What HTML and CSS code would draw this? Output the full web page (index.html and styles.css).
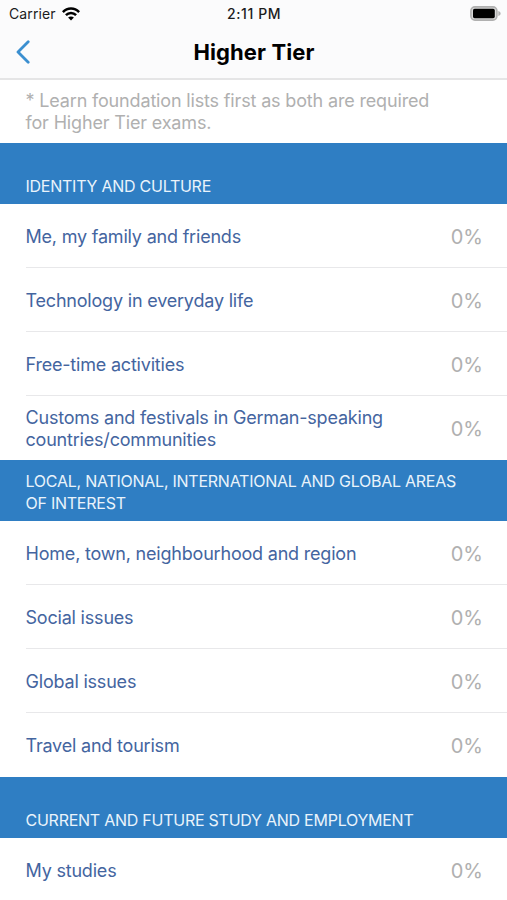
FILE: index.html
```html
<!DOCTYPE html>
<html lang="en">
<head>
  <meta charset="UTF-8">
  <meta name="viewport" content="width=device-width, initial-scale=1.0">
  <title>Higher Tier</title>
  <link rel="stylesheet" href="styles.css">
</head>
<body>
  <header class="top">
    <div class="status-bar">
      <div class="carrier">
        <span>Carrier</span>
        <svg class="wifi-icon" viewBox="0 0 18 14" fill="none" stroke="currentColor" stroke-width="2.5">
          <path d="M0.9 5.1C5.4 0.3 12.6 0.3 17.1 5.1"></path>
          <path d="M3.9 8.2C6.8 5.2 11.2 5.2 14.1 8.2"></path>
          <path d="M9 13.6L6.1 10.6C7.7 9.1 10.3 9.1 11.9 10.6Z" fill="currentColor" stroke="none"></path>
        </svg>
      </div>
      <span class="time">2:11 PM</span>
      <svg class="battery-icon" viewBox="0 0 31 15">
        <rect x="0.9" y="0.9" width="26" height="13.2" rx="4" fill="#d8d8d8" stroke="#b0b0b0" stroke-width="1.6"></rect>
        <rect x="3" y="2.8" width="21.8" height="9.4" rx="1.6" fill="#000"></rect>
        <path d="M28.3 5C31.4 6 31.4 9 28.3 10Z" fill="#b0b0b0"></path>
      </svg>
    </div>
    <nav class="nav-bar">
      <button class="back" aria-label="Back">
        <svg viewBox="0 0 14 24" fill="none" stroke="currentColor" stroke-width="2.8" stroke-linecap="round" stroke-linejoin="round">
          <path d="M12.2 1.8L2 12L12.2 22.2"></path>
        </svg>
      </button>
      <h1 class="title">Higher Tier</h1>
    </nav>
  </header>

  <main>
    <p class="note">* Learn foundation lists first as both are required<br>for Higher Tier exams.</p>

    <section>
      <h2 class="section-title">IDENTITY AND CULTURE</h2>
      <ul class="topics">
        <li class="topic"><span class="name">Me, my family and friends</span><span class="score">0%</span></li>
        <li class="topic"><span class="name">Technology in everyday life</span><span class="score">0%</span></li>
        <li class="topic"><span class="name">Free-time activities</span><span class="score">0%</span></li>
        <li class="topic"><span class="name">Customs and festivals in German-speaking<br>countries/communities</span><span class="score">0%</span></li>
      </ul>
    </section>

    <section>
      <h2 class="section-title">LOCAL, NATIONAL, INTERNATIONAL AND GLOBAL AREAS<br>OF INTEREST</h2>
      <ul class="topics">
        <li class="topic"><span class="name">Home, town, neighbourhood and region</span><span class="score">0%</span></li>
        <li class="topic"><span class="name">Social issues</span><span class="score">0%</span></li>
        <li class="topic"><span class="name">Global issues</span><span class="score">0%</span></li>
        <li class="topic"><span class="name">Travel and tourism</span><span class="score">0%</span></li>
      </ul>
    </section>

    <section>
      <h2 class="section-title">CURRENT AND FUTURE STUDY AND EMPLOYMENT</h2>
      <ul class="topics">
        <li class="topic"><span class="name">My studies</span><span class="score">0%</span></li>
      </ul>
    </section>
  </main>
</body>
</html>
```
FILE: styles.css
```css
:root {
  --blue: #2f7ec3;
  --name: #44659f;
  --muted: #b0b0b0;
  --line: #e8e8ea;
}

* {
  margin: 0;
  padding: 0;
  box-sizing: border-box;
}

body {
  font-family: Inter, "Liberation Sans", sans-serif;
  background-color: #fff;
  height: 900px;
  overflow: hidden;
}

.top {
  height: 80px;
  background-color: #fbfbfc;
  border-bottom: 2px solid #e5e5e6;
}

.status-bar {
  display: grid;
  grid-template-columns: 1fr auto 1fr;
  align-items: center;
  height: 27px;
  padding: 0 6px 0 9px;
  color: #1c1c1c;
  font-size: 14px;
}

.carrier {
  display: flex;
  align-items: center;
  gap: 6px;
  letter-spacing: 0.1px;
}

.wifi-icon {
  width: 18px;
  height: 14px;
  color: #000;
}

.time {
  font-size: 14px;
  font-weight: 500;
  letter-spacing: 0.6px;
  margin-right: 2px;
}

.battery-icon {
  width: 31px;
  height: 15px;
  justify-self: end;
}

.nav-bar {
  display: grid;
  grid-template-columns: 1fr auto 1fr;
  align-items: center;
  height: 50px;
  padding: 0 15px 0 16px;
}

.back {
  width: 15px;
  height: 24px;
  border: none;
  background: transparent;
  color: #3b8fd0;
  cursor: pointer;
}

.back svg {
  display: block;
  width: 14px;
  height: 24px;
}

.title {
  font-size: 22px;
  font-weight: 700;
  letter-spacing: 0.1px;
  color: #000;
}

.note {
  height: 63px;
  padding: 10px 25px 0 25.5px;
  color: var(--muted);
  font-size: 18px;
  letter-spacing: -0.16px;
  line-height: 22px;
}

.section-title {
  display: flex;
  align-items: flex-end;
  height: 61px;
  padding: 0 25px 7px 25.5px;
  background-color: var(--blue);
  color: #e9f3fb;
  font-size: 16px;
  font-weight: 400;
  letter-spacing: -0.25px;
  line-height: 22px;
}

.topics {
  list-style: none;
}

.topic {
  display: flex;
  align-items: center;
  justify-content: space-between;
  height: 64px;
  margin-left: 25.5px;
  padding: 2px 24px 0 0;
  border-bottom: 1px solid var(--line);
}

.topic:last-child {
  border-bottom-color: transparent;
}

.name {
  color: var(--name);
  font-size: 18px;
  letter-spacing: -0.2px;
  line-height: 22px;
}

.score {
  color: var(--muted);
  font-size: 20px;
}
```
